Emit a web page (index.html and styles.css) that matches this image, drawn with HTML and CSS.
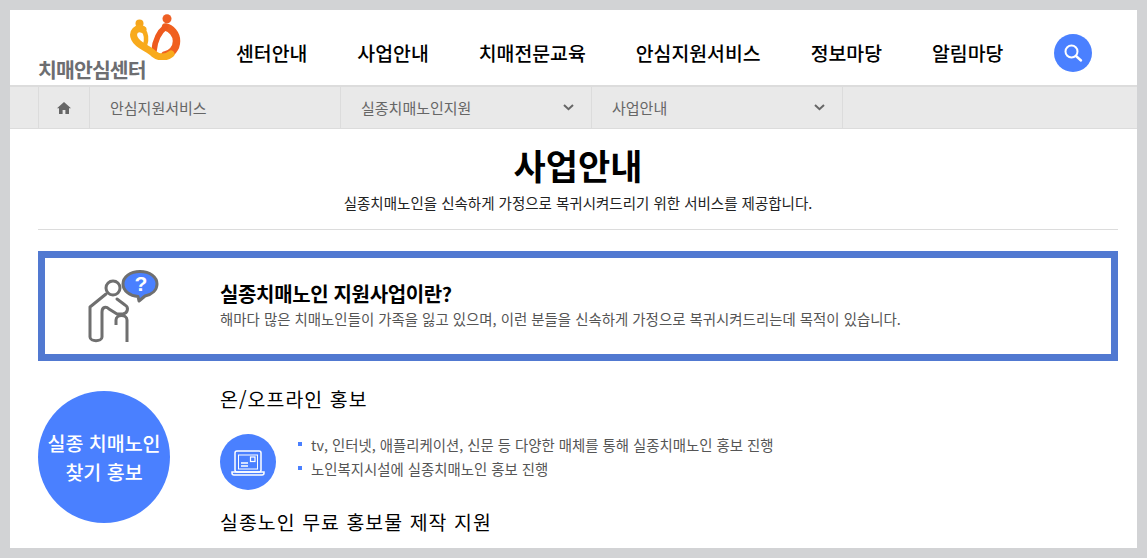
FILE: index.html
```html
<!DOCTYPE html>
<html lang="ko">
<head>
    <meta charset="UTF-8">
    <meta name="viewport" content="width=device-width, initial-scale=1.0">
    <title>사업안내 | 치매안심센터</title>
    <link rel="stylesheet" href="styles.css">
</head>
<body>
    <div class="page">
        <header class="site-header">
            <a class="logo" href="#">
                <svg class="logo-mark" width="52" height="46" viewBox="0 0 52 46" fill="none" stroke-linecap="round">
                    <circle cx="9.500" cy="9.500" r="4" fill="#f5a51c"/>
                    <circle cx="37" cy="4.700" r="4.500" fill="#ee5f24"/>
                    <path d="M35.500 13 C41 14 46.500 20 46.500 27 C46.500 35 41 40 35 41" stroke="#f0601f" stroke-width="7.500"/>
                    <path d="M35.500 13 C29 18 25 26 24 37" stroke="#ee5a1e" stroke-width="5.500"/>
                    <path d="M13 15.500 C7 12.500 1.500 18 4.500 24.500 C8 32 18 34 24 40 C29 44 36 44 41 40" stroke="#f8aa1c" stroke-width="7"/>
                    <path d="M13 15.500 C16.500 20 17 25 15 31" stroke="#f8aa1c" stroke-width="4.500"/>
                </svg>
                <span class="logo-text">치매안심센터</span>
            </a>
            <nav class="main-nav">
                <a href="#">센터안내</a>
                <a href="#">사업안내</a>
                <a href="#">치매전문교육</a>
                <a href="#">안심지원서비스</a>
                <a href="#">정보마당</a>
                <a href="#">알림마당</a>
            </nav>
            <button class="search-btn" type="button" aria-label="검색">
                <svg width="20" height="20" viewBox="0 0 20 20" fill="none" stroke="#fff">
                    <circle cx="8.500" cy="8.500" r="6" stroke-width="2"/>
                    <path d="M13 13 L18 17.500" stroke-width="2.400" stroke-linecap="round"/>
                </svg>
            </button>
        </header>

        <div class="crumb-bar">
            <div class="crumbs">
                <a class="crumb crumb-home" href="#">
                    <svg width="14" height="12" viewBox="0 0 14 12" fill="#666">
                        <path d="M7 0 L14 6.200 H12 V12 H8.400 V8 H5.600 V12 H2 V6.200 H0 Z"/>
                    </svg>
                </a>
                <a class="crumb crumb-first" href="#">안심지원서비스</a>
                <a class="crumb crumb-select" href="#">실종치매노인지원
                    <svg class="chev" width="11" height="7" viewBox="0 0 11 7" fill="none" stroke="#666" stroke-width="2"><path d="M1 1 L5.500 5.200 L10 1"/></svg>
                </a>
                <a class="crumb crumb-select crumb-last" href="#">사업안내
                    <svg class="chev" width="11" height="7" viewBox="0 0 11 7" fill="none" stroke="#666" stroke-width="2"><path d="M1 1 L5.500 5.200 L10 1"/></svg>
                </a>
            </div>
        </div>

        <main class="content">
            <div class="page-title">
                <h1>사업안내</h1>
                <p>실종치매노인을 신속하게 가정으로 복귀시켜드리기 위한 서비스를 제공합니다.</p>
            </div>

            <section class="intro-box">
                <div class="intro-icon">
                    <svg width="75" height="75" viewBox="0 0 75 75" fill="none" stroke="#6f6f6f" stroke-width="3">
                        <circle cx="28" cy="18" r="7"/>
                        <path d="M21 24 L5 37 V67 C5 72 17 72 17 67 V42 C17 37 21 36 24 39 L32 44 L38 44 C43 43 44 37 40 35 L32 29" stroke-linejoin="round" stroke-linecap="round"/>
                        <path d="M31 55 V50 C31 44 42 44 42 50 V72"/>
                        <path d="M55 1.500 C45 1.500 38 7 38 14 C38 21 45 26 53 26.500 L54 31 L60 26 C67 24.500 72 20 72 14 C72 7 65 1.500 55 1.500 Z" fill="#4a80ff" stroke-linejoin="round"/>
                        <text class="intro-q" x="56" y="20.500" text-anchor="middle">?</text>
                    </svg>
                </div>
                <div class="intro-text">
                    <h2>실종치매노인 지원사업이란?</h2>
                    <p>해마다 많은 치매노인들이 가족을 잃고 있으며, 이런 분들을 신속하게 가정으로 복귀시켜드리는데 목적이 있습니다.</p>
                </div>
            </section>

            <section class="service">
                <div class="service-badge">실종 치매노인<br>찾기 홍보</div>
                <div class="service-body">
                    <h3>온/오프라인 홍보</h3>
                    <div class="service-row">
                        <span class="service-icon">
                            <svg width="34" height="28" viewBox="0 0 34 28" fill="none" stroke="#fff">
                                <rect x="4" y="3" width="26" height="21" rx="2" stroke-width="1.500"/>
                                <rect x="7.500" y="7" width="19" height="14" stroke-width="1"/>
                                <path d="M1 24 H33 V25 C33 26.500 32 27 31 27 H3 C2 27 1 26.500 1 25 Z" stroke-width="1.500"/>
                                <rect x="19.500" y="9" width="4.500" height="4.500" stroke-width="1.200"/>
                                <path d="M10 15 H17 M10 18 H17" stroke-width="1.400"/>
                            </svg>
                        </span>
                        <ul>
                            <li>tv, 인터넷, 애플리케이션, 신문 등 다양한 매체를 통해 실종치매노인 홍보 진행</li>
                            <li>노인복지시설에 실종치매노인 홍보 진행</li>
                        </ul>
                    </div>
                    <h3>실종노인 무료 홍보물 제작 지원</h3>
                </div>
            </section>
        </main>
    </div>
</body>
</html>
```

FILE: styles.css
```css
:root {
    --blue: #4a80ff;
    --frame: #d2d3d5;
    --line: #dcdcdc;
    --text-gray: #666;
}

* {
    box-sizing: border-box;
    margin: 0;
    padding: 0;
}

html,
body {
    height: 100%;
    overflow: hidden;
}

body {
    font-family: "Noto Sans CJK KR", "Noto Sans", sans-serif;
    background-color: var(--frame);
    padding: 10px;
    color: #000;
}

a {
    color: inherit;
    text-decoration: none;
}

.page {
    background: #fff;
    height: 538px;
    overflow: hidden;
}

/* header */
.site-header {
    display: flex;
    align-items: flex-start;
    height: 75px;
    padding-left: 28px;
}

.logo {
    display: flex;
    flex-direction: column;
    width: 198px;
    flex: none;
}

.logo-mark {
    display: block;
    margin: 4px 0 0 92px;
}

.logo-text {
    margin-top: -3px;
    font-size: 20.5px;
    line-height: 24px;
    font-weight: 700;
    letter-spacing: -0.9px;
    color: #6d6e71;
}

.main-nav {
    display: flex;
    gap: 50px;
    padding-top: 29px;
}

.main-nav a {
    font-size: 19.4px;
    line-height: 28px;
    font-weight: 500;
    white-space: nowrap;
}

.search-btn {
    width: 38px;
    height: 38px;
    margin: 24px 0 0 51px;
    border: none;
    border-radius: 50%;
    background: var(--blue);
    display: flex;
    align-items: center;
    justify-content: center;
}

/* breadcrumb */
.crumb-bar {
    height: 44px;
    padding: 0 28px;
    background: #e9e9e9;
    border-top: 2px solid var(--line);
    border-bottom: 1px solid var(--line);
}

.crumbs {
    display: flex;
    height: 100%;
    border-left: 1px solid var(--line);
}

.crumb {
    display: flex;
    align-items: center;
    justify-content: space-between;
    font-size: 15px;
    color: var(--text-gray);
    border-right: 1px solid var(--line);
    padding: 0 17px 0 20px;
}

.crumb-home {
    width: 51px;
    justify-content: center;
    padding: 0;
}

.crumb-first {
    width: 251px;
}

.crumb-select {
    width: 251px;
}

/* page title */
.content {
    padding: 0 19px 0 28px;
}

.page-title {
    text-align: center;
    height: 101px;
    border-bottom: 1px solid var(--line);
    padding-top: 14px;
}

.page-title h1 {
    font-size: 35px;
    line-height: 44px;
    font-weight: 700;
}

.page-title p {
    font-size: 14.5px;
    line-height: 20px;
    margin-top: 6px;
    color: #222;
}

/* intro box */
.intro-box {
    display: flex;
    align-items: center;
    height: 110px;
    margin-top: 21px;
    border: 7px solid #5179d1;
}

.intro-icon {
    width: 175px;
    flex: none;
    padding: 3px 0 0 40px;
}

.intro-icon svg {
    display: block;
}

.intro-q {
    font-family: "Liberation Sans", sans-serif;
    font-size: 21px;
    font-weight: 700;
    fill: #fff;
    stroke: none;
}

.intro-text {
    padding-bottom: 2px;
}

.intro-text h2 {
    font-size: 20px;
    line-height: 26px;
    font-weight: 700;
    letter-spacing: -0.35px;
    margin-bottom: 2px;
}

.intro-text p {
    font-size: 14.45px;
    line-height: 20px;
    color: #555;
}

/* service */
.service {
    display: flex;
    margin-top: 30px;
}

.service-badge {
    width: 132px;
    height: 132px;
    flex: none;
    border-radius: 50%;
    background: var(--blue);
    color: #fff;
    display: flex;
    align-items: center;
    justify-content: center;
    text-align: center;
    font-size: 19.5px;
    line-height: 29px;
    font-weight: 500;
}

.service-body {
    padding-left: 50px;
}

.service-body h3 {
    font-size: 19.4px;
    line-height: 16px;
    font-weight: 400;
    letter-spacing: 1.07px;
}

.service-row {
    display: flex;
    align-items: center;
    gap: 22px;
    margin: 26px 0 23px;
}

.service-icon {
    width: 56px;
    height: 56px;
    border-radius: 50%;
    background: var(--blue);
    display: flex;
    align-items: center;
    justify-content: center;
}

.service-row ul {
    list-style: none;
    padding-bottom: 10px;
}

.service-row li {
    position: relative;
    padding-left: 13px;
    font-size: 14.4px;
    line-height: 24px;
    color: #555;
}

.service-row li::before {
    content: "";
    position: absolute;
    left: 0;
    top: 9px;
    width: 4px;
    height: 4px;
    background: var(--blue);
}
```
